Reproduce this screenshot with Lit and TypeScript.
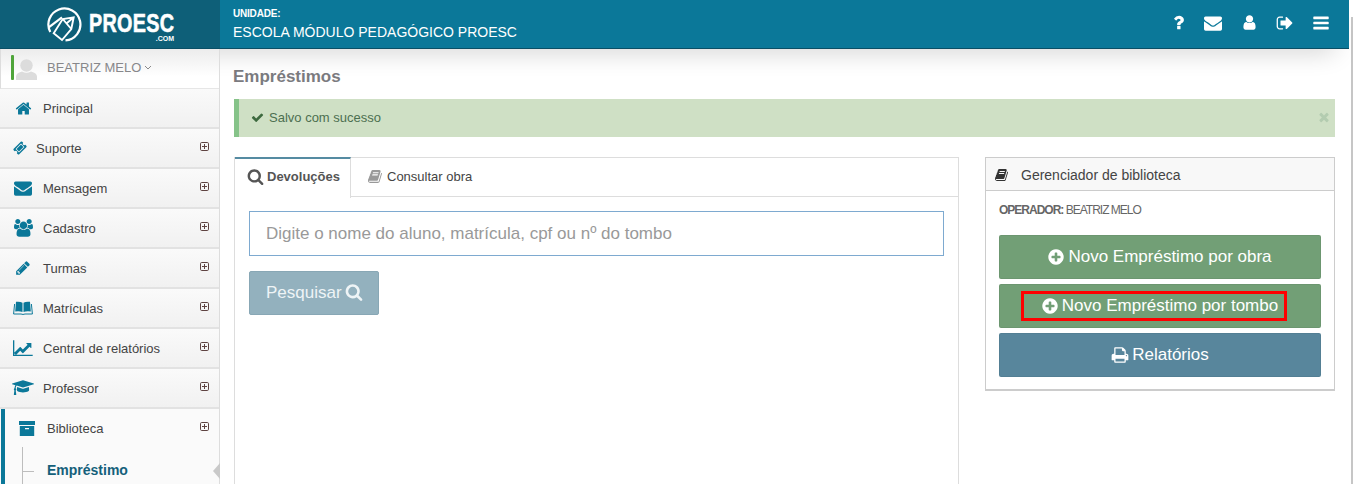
import { LitElement, html, css } from "lit";
import { customElement } from "lit/decorators.js";

const P: Record<string, string> = {
  home: "M1472 992v480q0 26-19 45t-45 19h-384v-384h-256v384h-384q-26 0-45-19t-19-45v-480q0-1 .5-3t.5-3l575-474 575 474q1 2 1 6zm223-69l-62 74q-8 9-21 11h-3q-13 0-21-7l-692-577-692 577q-12 8-24 7-13-2-21-11l-62-74q-8-10-7-23.5t11-21.5l719-599q32-26 76-26t76 26l244 204v-195q0-14 9-23t23-9h192q14 0 23 9t9 23v408l219 182q10 8 11 21.5t-7 23.5z",
  ticket: "M1024 452l316 316-572 572-316-316zm-211 979l618-618q19-19 19-45t-19-45l-362-362q-18-18-45-18t-45 18l-618 618q-19 19-19 45t19 45l362 362q18 18 45 18t45-18zm889-637l-907 908q-37 37-90.5 37t-90.5-37l-126-126q56-56 56-136t-56-136-136-56-136 56l-125-126q-37-37-37-90.5t37-90.5l907-906q37-37 90.5-37t90.5 37l125 125q-56 56-56 136t56 136 136 56 136-56l126 125q37 37 37 90.5t-37 90.5z",
  envelope: "M1792 710v794q0 66-47 113t-113 47h-1472q-66 0-113-47t-47-113v-794q44 49 101 87 362 246 497 345 57 42 92.5 65.5t94.5 48 110 24.5h2q51 0 110-24.5t94.5-48 92.5-65.5q170-123 498-345 57-39 100-87zm0-294q0 79-49 151t-122 123q-376 261-468 325-10 7-42.5 30.5t-54 38-52 32.5-57.5 27-50 9h-2q-23 0-50-9t-57.5-27-52-32.5-54-38-42.5-30.5q-91-64-262-182.5t-205-142.5q-62-42-117-115.5t-55-136.5q0-78 41.5-130t118.5-52h1472q65 0 112.5 47t47.5 113z",
  users: "M593 896q-162 5-265 128h-134q-82 0-138-40.5t-56-118.5q0-353 124-353 6 0 43.5 21t97.5 42.5 119 21.5q67 0 133-23-5 37-5 66 0 139 81 256zm1071 637q0 120-73 189.5t-194 69.5h-874q-121 0-194-69.5t-73-189.5q0-53 3.5-103.5t14-109 26.5-108.5 43-97.5 62-81 85.5-53.5 111.5-20q10 0 43 21.5t73 48 107 48 135 21.5 135-21.5 107-48 73-48 43-21.5q61 0 111.5 20t85.5 53.5 62 81 43 97.5 26.5 108.5 14 109 3.5 103.5zm-1024-1277q0 106-75 181t-181 75-181-75-75-181 75-181 181-75 181 75 75 181zm704 384q0 159-112.5 271.5t-271.5 112.5-271.5-112.5-112.5-271.5 112.5-271.5 271.5-112.5 271.5 112.5 112.5 271.5zm576 225q0 78-56 118.5t-138 40.5h-134q-103-123-265-128 81-117 81-256 0-29-5-66 66 23 133 23 59 0 119-21.5t97.5-42.5 43.5-21q124 0 124 353zm-128-609q0 106-75 181t-181 75-181-75-75-181 75-181 181-75 181 75 75 181z",
  pencil: "M491 1536l91-91-235-235-91 91v107h128v128h107zm523-928q0-22-22-22-10 0-17 7l-542 542q-7 7-7 17 0 22 22 22 10 0 17-7l542-542q7-7 7-17zm-54-192l416 416-832 832h-416v-416zm683 96q0 53-37 90l-166 166-416-416 166-165q36-38 90-38 53 0 91 38l235 234q37 39 37 91z",
  chart: "M1920 1536v128h-1920v-1536h128v1408h1792zm-128-1120v435q0 21-19.5 29.5t-35.5-7.5l-121-121-633 633q-10 10-23 10t-23-10l-233-233-416 416-192-192 585-585q10-10 23-10t23 10l233 233 464-464-121-121q-16-16-7.5-35.5t29.5-19.5h435q14 0 23 9t9 23z",
  cap: "M1774 836l18 316q4 69-82 128t-235 93.5-323 34.5-323-34.5-235-93.5-82-128l18-316 574 181q22 7 48 7t48-7zm530-324q0 23-22 31l-1120 352q-4 1-10 1t-10-1l-652-206q-43 34-71 111.5t-34 178.5q63 36 63 109 0 69-58 107l58 433q2 14-8 25-9 11-24 11h-192q-15 0-24-11-10-11-8-25l58-433q-58-38-58-107 0-73 65-111 11-207 98-330l-333-104q-22-8-22-31t22-31l1120-352q4-1 10-1t10 1l1120 352q22 8 22 31z",
  user: "M1536 1399q0 109-62.5 187t-150.5 78h-854q-88 0-150.5-78t-62.5-187q0-85 8.5-160.5t31.5-152 58.5-131 94-89 134.5-34.5q131 128 313 128t313-128q76 0 134.5 34.5t94 89 58.5 131 31.5 152 8.5 160.5zm-256-887q0 159-112.5 271.5t-271.5 112.5-271.5-112.5-112.5-271.5 112.5-271.5 271.5-112.5 271.5 112.5 112.5 271.5z",
  search: "M1216 832q0-185-131.5-316.5t-316.5-131.5-316.5 131.5-131.5 316.5 131.5 316.5 316.5 131.5 316.5-131.5 131.5-316.5zm512 832q0 52-38 90t-90 38q-54 0-90-38l-343-342q-179 124-399 124-143 0-273.5-55.5t-225-150-150-225-55.5-273.5 55.5-273.5 150-225 225-150 273.5-55.5 273.5 55.5 225 150 150 225 55.5 273.5q0 220-124 399l343 343q37 37 37 90z",
  bars: "M1664 1344v128q0 26-19 45t-45 19h-1408q-26 0-45-19t-19-45v-128q0-26 19-45t45-19h1408q26 0 45 19t19 45zm0-512v128q0 26-19 45t-45 19h-1408q-26 0-45-19t-19-45v-128q0-26 19-45t45-19h1408q26 0 45 19t19 45zm0-512v128q0 26-19 45t-45 19h-1408q-26 0-45-19t-19-45v-128q0-26 19-45t45-19h1408q26 0 45 19t19 45z",
  check: "M1671 566q0 40-28 68l-724 724-136 136q-28 28-68 28t-68-28l-136-136-362-362q-28-28-28-68t28-68l136-136q28-28 68-28t68 28l294 295 656-657q28-28 68-28t68 28l136 136q28 28 28 68z",
  times: "M1490 1322q0 40-28 68l-136 136q-28 28-68 28t-68-28l-294-294-294 294q-28 28-68 28t-68-28l-136-136q-28-28-28-68t28-68l294-294-294-294q-28-28-28-68t28-68l136-136q28-28 68-28t68 28l294 294 294-294q28-28 68-28t68 28l136 136q28 28 28 68t-28 68l-294 294 294 294q28 28 28 68z",
  plus: "M1344 960v-128q0-26-19-45t-45-19h-256v-256q0-26-19-45t-45-19h-128q-26 0-45 19t-19 45v256h-256q-26 0-45 19t-19 45v128q0 26 19 45t45 19h256v256q0 26 19 45t45 19h128q26 0 45-19t19-45v-256h256q26 0 45-19t19-45zm320-64q0 209-103 385.5t-279.5 279.5-385.5 103-385.5-103-279.5-279.5-103-385.5 103-385.5 279.5-279.5 385.5-103 385.5 103 279.5 279.5 103 385.5z",
  print: "M448 1536h896v-256h-896v256zm0-640h896v-384h-160q-40 0-68-28t-28-68v-160h-640v640zm1152 64q0-26-19-45t-45-19-45 19-19 45 19 45 45 19 45-19 19-45zm128 0v416q0 13-9.5 22.5t-22.5 9.5h-224v160q0 40-28 68t-68 28h-960q-40 0-68-28t-28-68v-160h-224q-13 0-22.5-9.5t-9.5-22.5v-416q0-79 56.5-135.5t135.5-56.5h64v-544q0-40 28-68t68-28h672q40 0 88 20t76 48l152 152q28 28 48 76t20 88v256h64q79 0 135.5 56.5t56.5 135.5z",
  signout: "M704 1440q0 4 1 20t.5 26.5-3 23.5-10 19.5-20.5 6.5h-320q-119 0-203.5-84.5t-84.5-203.5v-704q0-119 84.5-203.5t203.5-84.5h320q13 0 22.5 9.5t9.5 22.5q0 4 1 20t.5 26.5-3 23.5-10 19.5-20.5 6.5h-320q-66 0-113 47t-47 113v704q0 66 47 113t113 47h312l11.5 1 11.5 3 8 5.5 7 9 2 13.5zm928-544q0 26-19 45l-544 544q-19 19-45 19t-45-19-19-45v-288h-448q-26 0-45-19t-19-45v-384q0-26 19-45t45-19h448v-288q0-26 19-45t45-19 45 19l544 544q19 19 19 45z",
  question: "M1088 1256v240q0 16-12 28t-28 12h-240q-16 0-28-12t-12-28v-240q0-16 12-28t28-12h240q16 0 28 12t12 28zm316-600q0 54-15.5 101t-35 76.5-55 59.5-57.5 43.5-61 35.5q-41 23-68.5 65t-27.5 67q0 17-12 32.5t-28 15.5h-240q-15 0-25.5-18.5t-10.5-37.5v-45q0-83 65-156.5t143-108.5q59-27 84-56t25-76q0-42-46.5-74t-107.5-32q-65 0-108 29-35 25-107 115-13 16-31 16-12 0-25-8l-164-125q-13-10-15.5-25t5.5-28q160-266 464-266 80 0 161 31t146 83 106 127.5 41 158.5z",
  book: "M1639 478q40 57 18 129l-275 906q-19 64-76.5 107.5t-122.5 43.5h-923q-77 0-148.5-53.5t-99.5-131.5q-24-67-2-127 0-4 3-27t4-37q1-8-3-21.5t-3-19.5q2-11 8-21t16.5-23.5 16.5-23.5q23-38 45-91.5t30-91.5q3-10 .5-30t-.5-28q3-11 17-28t17-23q21-36 42-92t25-90q1-9-2.5-32t.5-28q4-13 22-30.5t22-22.5q19-26 42.5-84.5t27.5-96.5q1-8-3-25.5t-2-26.5q2-8 9-18t18-23 17-21q8-12 16.5-30.5t15-35 16-36 19.5-32 26.5-23.5 36-11.5 47.5 5.5l-1 3q38-9 51-9h761q74 0 114 56t18 130l-274 906q-36 119-71.5 153.5t-128.5 34.5h-869q-27 0-38 15-11 16-1 43 24 70 144 70h923q29 0 56-15.5t35-41.5l300-987q7-22 5-57 38 15 59 43zm-1064 2q-4 13 2 22.5t20 9.5h608q13 0 25.5-9.5t16.5-22.5l21-64q4-13-2-22.5t-20-9.5h-608q-13 0-25.5 9.5t-16.5 22.5zm-83 256q-4 13 2 22.5t20 9.5h608q13 0 25.5-9.5t16.5-22.5l21-64q4-13-2-22.5t-20-9.5h-608q-13 0-25.5 9.5t-16.5 22.5z",
};

const fa = (name: string, vbw: number, w: number, cls = "") =>
  html`<svg class="fa ${cls}" viewBox="0 0 ${vbw} 1792" width=${w} height=${(w * 1792) / vbw} fill="currentColor"><path d=${P[name]}></path></svg>`;

const plusBox = html`<svg class="plusbox" viewBox="0 0 9 9" width="9" height="9" fill="none" stroke="#5e4341" stroke-width="1"><rect x=".5" y=".5" width="8" height="8" rx="1.2"></rect><path d="M2 4.5h5M4.5 2v5"></path></svg>`;

const openBook = html`<svg viewBox="0 0 20 14" width="20" height="14" fill="currentColor"><path d="M3 .8Q7 .2 9.5 1.8V11Q6.5 9.7 2.2 10.4ZM10.5 1.8Q13 .2 17 .8L17.8 10.4Q13.5 9.7 10.5 11Z"></path><path d="M1.6 3 .6 13H8Q10 13.9 12 13H19.4L18.4 3" fill="none" stroke="currentColor" stroke-width="1"></path></svg>`;

const archive = html`<svg viewBox="0 0 16 15" width="16" height="15" fill="currentColor"><rect x="0" y="0" width="16" height="4"></rect><path d="M.8 5H15.2V15H.8ZM6 7V8.2H10V7Z" fill-rule="evenodd"></path></svg>`;

const avatar = html`<svg viewBox="0 0 21 21" width="21" height="21" fill="currentColor"><circle cx="10.5" cy="6.5" r="6.2"></circle><path d="M0 21V17.5Q0 14 6 12.5Q10.5 15 15 12.5Q21 14 21 17.5V21Z"></path></svg>`;

type Item = { label: string; icon: unknown; left: number; text: number; plus: boolean };
const items: Item[] = [
  { label: "Principal", icon: fa("home", 1792, 17), left: 15, text: 43, plus: false },
  { label: "Suporte", icon: fa("ticket", 1792, 14), left: 13, text: 36, plus: true },
  { label: "Mensagem", icon: fa("envelope", 1792, 18), left: 14, text: 43, plus: true },
  { label: "Cadastro", icon: fa("users", 1920, 19), left: 14, text: 43, plus: true },
  { label: "Turmas", icon: fa("pencil", 1792, 16), left: 15, text: 43, plus: true },
  { label: "Matrículas", icon: openBook, left: 13, text: 43, plus: true },
  { label: "Central de relatórios", icon: fa("chart", 2048, 21), left: 13, text: 43, plus: true },
  { label: "Professor", icon: fa("cap", 2304, 22), left: 12, text: 43, plus: true },
];

@customElement("app-root")
export class AppRoot extends LitElement {
  static styles = css`
    :host { display: flex; width: 1353px; height: 484px; overflow: hidden; background: #fff; font-family: "Liberation Sans", Arial, sans-serif; color: #333; }
    * { box-sizing: border-box; }
    .fa { display: block; flex: none; }
    .page { width: 1349px; height: 484px; display: flex; flex-direction: column; flex: none; }
    .scroll { width: 4px; padding: 17px 0 0 2px; flex: none; }
    .scroll div { height: 100%; background: #c6c6c6; }

    .top { height: 49px; flex: none; display: flex; background: #0b7899; border-bottom: 1px solid #0a4f66; color: #fff; box-shadow: 0 16px 26px -14px rgba(0,0,0,.2); position: relative; }
    .logo { width: 220px; flex: none; background: #0e5f78; display: flex; align-items: flex-start; padding: 7px 0 0 46px; gap: 7px; }
    .logotext { width: 85px; padding-top: 6px; }
    .proesc { font-size: 26px; line-height: 21px; font-weight: 700; display: block; transform: scaleX(.76); transform-origin: left center; letter-spacing: .4px; white-space: nowrap; -webkit-text-stroke: .6px #fff; }
    .com { display: block; font-size: 7px; line-height: 8px; font-weight: 700; text-align: right; margin-top: 1px; }
    .unit { padding: 8px 0 0 13px; flex: 1; }
    .unit small { display: block; font-size: 10px; line-height: 11px; font-weight: 700; letter-spacing: -.2px; }
    .unit strong { display: block; font-weight: 400; font-size: 14px; line-height: 17px; margin-top: 5px; white-space: nowrap; }
    .tools { display: flex; align-items: center; padding: 0 19px 3px 0; }
    .tools .q { margin-right: 16px; }
    .tools .e { margin-right: 19px; }
    .tools .u { margin-right: 18px; }
    .tools .s { margin-right: 18px; }

    .body { flex: 1; display: flex; min-height: 0; }
    .side { width: 220px; flex: none; border-right: 1px solid #ddd; position: relative; background: #fafafa; }
    .who { height: 40px; display: flex; align-items: center; padding: 0 0 2px 11px; background: linear-gradient(#ececec, #fff 70%); border-left: 1px solid #ddd; color: #87878a; font-size: 13px; border-bottom: 1px solid #e6e6e6; }
    .who .bar { width: 3px; height: 25px; background: #4fa53a; border-radius: 1px; margin-left: -1px; }
    .who .avatar { color: #dcdcdc; margin: 3px 10px 0 2px; display: flex; }
    .chev { margin-left: 3px; }
    .item { height: 40px; display: flex; align-items: center; background: linear-gradient(#fafafa, #f1f1f1); border-bottom: 2px solid #e2e2e2; font-size: 13px; color: #444; position: relative; }
    .icon { color: #0b7899; flex: none; display: flex; }
    .item .lab { flex: 1; }
    .plusbox { margin: -4px 10px 0 0; flex: none; }
    .lib { height: 38px; display: flex; align-items: center; border-left: 4px solid #0b7899; margin-left: 1px; font-size: 13px; color: #444; background: #fafafa; }
    .lib .icon { margin: 0 12px 0 14px; }
    .lib .lab { flex: 1; }
    .sub { border-left: 4px solid #0b7899; margin-left: 1px; height: 48px; display: flex; align-items: center; position: relative; background: #fafafa; }
    .tree { width: 1px; height: 100%; background: #bdbdbd; margin-left: 17px; flex: none; }
    .tick { width: 11px; height: 1px; background: #bdbdbd; flex: none; margin: 0 13px 0 0; }
    .sub b { font-size: 14px; color: #14607a; margin-top: -2px; }
    .caret { position: absolute; right: -1px; top: 16px; width: 0; height: 0; border-style: solid; border-width: 8px 7px 8px 0; border-color: transparent #c9c9c9 transparent transparent; }

    .main { flex: 1; padding: 0 14px 0 13px; min-width: 0; }
    h1 { margin: 18px 0 0; font-size: 17px; line-height: 20px; font-weight: 700; color: #7b7b7f; }
    .alert { margin: 12px 0 0 1px; height: 38px; background: #cfe0c5; border-left: 5px solid #86c389; display: flex; align-items: center; padding: 0 4px 2px 12px; font-size: 13px; color: #4c6f50; }
    .alert .ok { margin-right: 5px; color: #3d6a3f; }
    .alert .txt { flex: 1; }
    .alert .x { color: #b3ccb0; }
    .cols { display: flex; margin: 20px 0 0 1px; gap: 26px; align-items: flex-start; }
    .tabs { width: 725px; height: 340px; border: 1px solid #ddd; border-top: 0; flex: none; }
    .tabbar { height: 40px; display: flex; border-bottom: 1px solid #ddd; border-top: 1px solid #ddd; }
    .tab { display: flex; align-items: center; color: #555; }
    .tab.on { width: 116px; margin: -1px 0 -1px 0; height: 41px; border-top: 2px solid #558ba2; border-right: 1px solid #ddd; background: #fff; padding: 0 0 5px 12px; font-weight: 700; font-size: 13px; gap: 3px; color: #555; }
    .tab.off { padding-left: 17px; font-size: 13px; color: #444; gap: 4px; margin-top: -1px; }
    .tab.off .fa { color: #999; }
    .pane { padding: 14px 14px 0; }
    .input { height: 45px; border: 1px solid #7eaad0; display: flex; align-items: center; padding-left: 16px; font-size: 17px; color: #999; }
    .search { margin-top: 15px; width: 130px; height: 44px; background: #93b1be; border: 1px solid #88a7b5; border-radius: 2px; color: #eef4f6; font-size: 17px; display: flex; align-items: center; gap: 4px; padding-left: 16px; }
    .search .fa { margin: -2px 0 0 -1px; }

    .panel { width: 350px; height: 234px; border: 1px solid #ccc; border-bottom-width: 2px; flex: none; }
    .phead { height: 33px; background: #f8f8f8; border-bottom: 1px solid #ccc; display: flex; align-items: center; padding: 1px 0 0 9px; font-size: 14px; color: #444; }
    .phead .fa { margin-right: 12px; color: #333; }
    .oper { margin: 0; padding: 12px 0 0 13px; font-size: 12px; line-height: 14px; letter-spacing: -1px; color: #666; height: 44px; }
    .btns { padding: 0 13px; display: flex; flex-direction: column; gap: 5px; }
    .btn { height: 44px; border-radius: 2px; color: #fff; font-size: 17px; display: flex; align-items: center; justify-content: center; gap: 3px; position: relative; border: 1px solid rgba(0,0,0,.05); }
    .btn .pl { margin-left: -1px; }
    .green { background: #729f76; }
    .blue { background: #58869c; }
    .mark { position: absolute; left: 21px; top: 6px; width: 266px; height: 30px; border: 3px solid #f00; }
  `;

  render() {
    return html`
      <div class="page">
        <header class="top">
          <div class="logo">
            <svg viewBox="0 0 36 36" width="36" height="36" fill="none" stroke="#fff" stroke-width="2.2">
              <path d="M4.3 25A16 16 0 1 1 19.5 33.4"></path>
              <path d="M2.7 20.3 16 10.3"></path>
              <path stroke-width="1.9" d="M7.7 26.3 16 33 25.3 22 27.7 10.3 16.7 12ZM16.7 12 25.3 22M21 16l6.7-5.7"></path>
            </svg>
            <div class="logotext"><span class="proesc">PROESC</span><span class="com">.COM</span></div>
          </div>
          <div class="unit"><small>UNIDADE:</small><strong>ESCOLA MÓDULO PEDAGÓGICO PROESC</strong></div>
          <div class="tools">
            <span class="q">${fa("question", 1792, 19)}</span>
            <span class="e">${fa("envelope", 1792, 18)}</span>
            <span class="u">${fa("user", 1792, 17)}</span>
            <span class="s">${fa("signout", 1792, 18)}</span>
            ${fa("bars", 1792, 18)}
          </div>
        </header>
        <div class="body">
          <nav class="side">
            <div class="who">
              <span class="bar"></span>
              <span class="avatar">${avatar}</span>
              BEATRIZ MELO
              <svg class="chev" viewBox="0 0 8 5" width="8" height="5" fill="none" stroke="#8a8a8a"><path d="M1 1l3 3 3-3"></path></svg>
            </div>
            ${items.map(
              (i) => html`<div class="item">
                <span class="icon" style="margin-left:${i.left}px;width:${i.text - i.left}px">${i.icon}</span>
                <span class="lab">${i.label}</span>
                ${i.plus ? plusBox : ""}
              </div>`
            )}
            <div class="lib"><span class="icon">${archive}</span><span class="lab">Biblioteca</span>${plusBox}</div>
            <div class="sub"><span class="tree"></span><span class="tick"></span><b>Empréstimo</b><span class="caret"></span></div>
          </nav>
          <main class="main">
            <h1>Empréstimos</h1>
            <div class="alert">
              <span class="ok">${fa("check", 1792, 13)}</span>
              <span class="txt">Salvo com sucesso</span>
              <span class="x">${fa("times", 1792, 14)}</span>
            </div>
            <div class="cols">
              <section class="tabs">
                <div class="tabbar">
                  <div class="tab on">${fa("search", 1792, 17)}Devoluções</div>
                  <div class="tab off">${fa("book", 1792, 15)}Consultar obra</div>
                </div>
                <div class="pane">
                  <div class="input">Digite o nome do aluno, matrícula, cpf ou nº do tombo</div>
                  <div class="search">Pesquisar${fa("search", 1792, 18)}</div>
                </div>
              </section>
              <aside class="panel">
                <div class="phead">${fa("book", 1792, 14)}Gerenciador de biblioteca</div>
                <p class="oper"><b>OPERADOR:</b> BEATRIZ MELO</p>
                <div class="btns">
                  <div class="btn green">${fa("plus", 1792, 18, "pl")}Novo Empréstimo por obra</div>
                  <div class="btn green">${fa("plus", 1792, 18, "pl")}Novo Empréstimo por tombo<span class="mark"></span></div>
                  <div class="btn blue">${fa("print", 1792, 18)}Relatórios</div>
                </div>
              </aside>
            </div>
          </main>
        </div>
      </div>
      <div class="scroll"><div></div></div>
    `;
  }
}
